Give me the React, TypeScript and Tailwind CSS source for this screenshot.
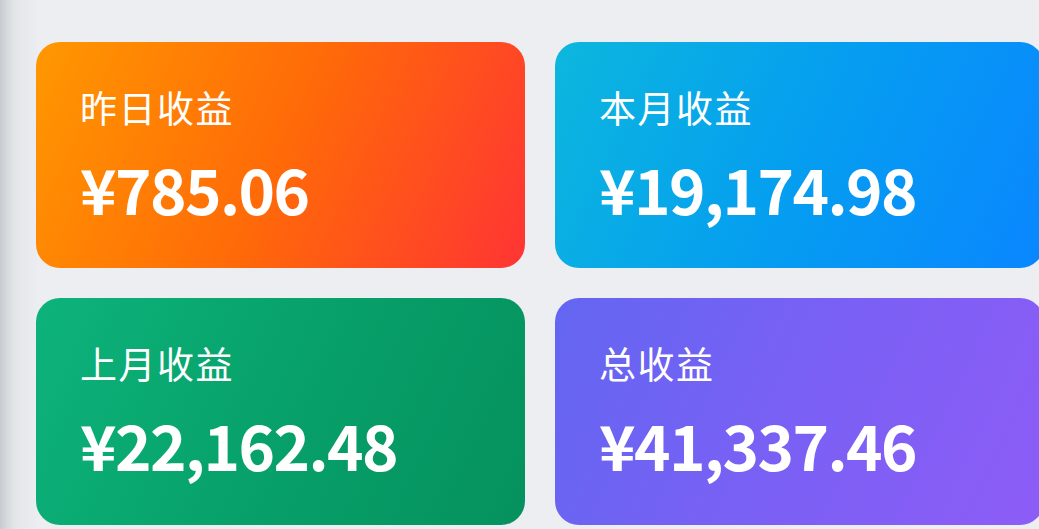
import React from 'react'

interface StatCard {
    label: string;
    amount: string;
    gradient: string;
}

const cards: StatCard[] = [
    { label: '昨日收益', amount: '¥785.06', gradient: 'bg-[linear-gradient(115deg,#ff9800_0%,#ff6a08_50%,#ff3434_100%)]' },
    { label: '本月收益', amount: '¥19,174.98', gradient: 'bg-[linear-gradient(115deg,#0cb7dd_0%,#059ef0_50%,#0a86ff_100%)]' },
    { label: '上月收益', amount: '¥22,162.48', gradient: 'bg-[linear-gradient(115deg,#0db37b_0%,#079f69_55%,#05915e_100%)]' },
    { label: '总收益', amount: '¥41,337.46', gradient: 'bg-[linear-gradient(115deg,#6366f1_0%,#7a60f4_50%,#8d5cf7_100%)]' },
]

const App: React.FC = () => {
    return (
        <div className="w-full h-[529px] overflow-hidden bg-[linear-gradient(to_right,#c8ccd0_0px,#e3e6e9_14px,#eceef1_40px)]">
            <div
                className="grid grid-cols-[489px_489px] grid-rows-[226px_227px] gap-[30px] pl-[36px] pt-[42px] w-[1044px]"
                style={{ fontFamily: '"Noto Sans CJK SC", "Noto Sans", sans-serif' }}
            >
                {cards.map((card) => (
                    <div
                        key={card.label}
                        className={`${card.gradient} rounded-[24px] flex flex-col pl-[44px] pt-[40px] text-white`}
                    >
                        <div className="text-[37px] leading-[50px] font-normal tracking-[1.5px]">
                            {card.label}
                        </div>
                        <div className="text-[62px] leading-[80px] font-bold mt-[16px] tracking-[-1.6px]">
                            {card.amount}
                        </div>
                    </div>
                ))}
            </div>
        </div>
    )
}

export default App
